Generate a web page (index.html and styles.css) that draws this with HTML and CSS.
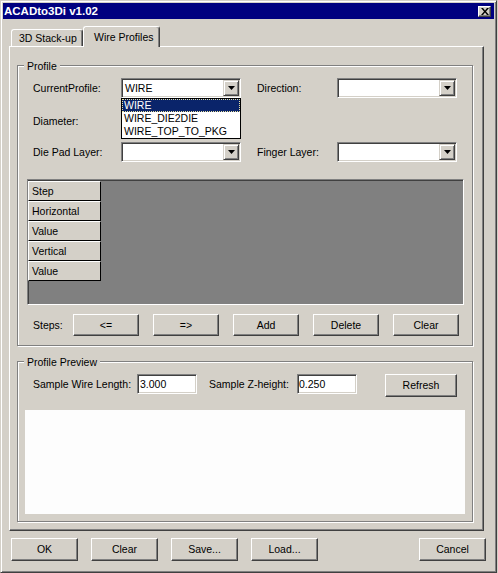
FILE: index.html
```html
<!DOCTYPE html>
<html>
<head>
<meta charset="utf-8">
<title>ACADto3Di v1.02</title>
<link rel="stylesheet" href="styles.css">
</head>
<body>
<div class="window">
  <div class="titlebar">
    <span class="title">ACADto3Di v1.02</span>
    <span class="close-btn"><svg width="8" height="7" viewBox="0 0 8 7"><path d="M0 0h2l2 2.4L6 0h2L5 3.5 8 7H6L4 4.6 2 7H0l3-3.5z" fill="#000"/></svg></span>
  </div>
  <div class="tabs">
    <div class="tab tab-first">3D Stack-up</div>
    <div class="tab tab-active">Wire Profiles</div>
  </div>
  <div class="panel">
    <div class="group group-profile">
      <span class="legend">Profile</span>
      <div class="form-grid">
        <span class="lbl">CurrentProfile:</span>
        <div class="combo-wrap">
          <div class="combo"><span class="combo-text">WIRE</span><span class="combo-btn"><svg width="7" height="4" viewBox="0 0 7 4"><path d="M0 0h7L3.5 4z" fill="#000"/></svg></span></div>
          <div class="droplist">
            <div class="item item-sel">WIRE</div>
            <div class="item">WIRE_DIE2DIE</div>
            <div class="item">WIRE_TOP_TO_PKG</div>
          </div>
        </div>
        <span></span>
        <span class="lbl">Direction:</span>
        <div class="combo"><span class="combo-text"></span><span class="combo-btn"><svg width="7" height="4" viewBox="0 0 7 4"><path d="M0 0h7L3.5 4z" fill="#000"/></svg></span></div>

        <span class="lbl lbl-diam">Diameter:</span>
        <span class="empty-row"></span>

        <span class="lbl">Die Pad Layer:</span>
        <div class="combo"><span class="combo-text"></span><span class="combo-btn"><svg width="7" height="4" viewBox="0 0 7 4"><path d="M0 0h7L3.5 4z" fill="#000"/></svg></span></div>
        <span></span>
        <span class="lbl">Finger Layer:</span>
        <div class="combo"><span class="combo-text"></span><span class="combo-btn"><svg width="7" height="4" viewBox="0 0 7 4"><path d="M0 0h7L3.5 4z" fill="#000"/></svg></span></div>
      </div>

      <div class="data-grid">
        <div class="hcell">Step</div>
        <div class="hcell">Horizontal</div>
        <div class="hcell">Value</div>
        <div class="hcell">Vertical</div>
        <div class="hcell">Value</div>
      </div>

      <div class="steps-row">
        <span class="steps-lbl">Steps:</span>
        <div class="steps-btns">
          <button class="btn btn-step">&lt;=</button>
          <button class="btn btn-step">=&gt;</button>
          <button class="btn btn-step">Add</button>
          <button class="btn btn-step">Delete</button>
          <button class="btn btn-step">Clear</button>
        </div>
      </div>
    </div>

    <div class="group group-preview">
      <span class="legend">Profile Preview</span>
      <div class="preview-row">
        <span class="lbl lbl-len">Sample Wire Length:</span>
        <span class="textbox">3.000</span>
        <span class="lbl lbl-z">Sample Z-height:</span>
        <span class="textbox textbox-z">0.250</span>
        <button class="btn btn-refresh">Refresh</button>
      </div>
      <div class="preview-canvas"></div>
    </div>
  </div>
  <div class="footer">
    <button class="btn btn-foot">OK</button>
    <button class="btn btn-foot">Clear</button>
    <button class="btn btn-foot">Save...</button>
    <button class="btn btn-foot">Load...</button>
    <button class="btn btn-foot btn-cancel">Cancel</button>
  </div>
</div>
</body>
</html>
```

FILE: styles.css
```css
* {
  box-sizing: border-box;
}

body {
  margin: 0;
  background: #d4d0c8;
  font-family: "Liberation Sans", Arial, sans-serif;
  font-size: 10.5px;
  line-height: 13px;
  color: #000;
}

.window {
  width: 497px;
  height: 573px;
  border: 1px solid;
  border-color: #d4d0c8 #404040 #404040 #d4d0c8;
  box-shadow: inset 1px 1px #fff, inset -1px -1px #808080;
  padding: 2px;
  display: flex;
  flex-direction: column;
  background: #d4d0c8;
}

.titlebar {
  height: 16px;
  flex: none;
  background: #000080;
  color: #fff;
  display: flex;
  align-items: center;
  justify-content: space-between;
  padding: 0 3px 0 1px;
}

.title {
  font-weight: bold;
  font-size: 11.5px;
}

.close-btn {
  width: 13px;
  height: 11px;
  background: #d4d0c8;
  border: 1px solid;
  border-color: #fff #404040 #404040 #fff;
  box-shadow: inset -1px -1px #808080;
  display: flex;
  align-items: center;
  justify-content: center;
}

.close-btn svg {
  display: block;
}

/* Tabs */
.tabs {
  flex: none;
  height: 21px;
  margin-top: 7px;
  margin-bottom: -1px;
  padding-left: 8px;
  display: flex;
  align-items: flex-start;
}

.tab {
  border: 1px solid;
  border-bottom: none;
  border-color: #fff #404040 #404040 #fff;
  border-radius: 3px 3px 0 0;
  box-shadow: inset -1px 0 #808080;
  background: #d4d0c8;
  line-height: 16px;
  white-space: nowrap;
}

.tab-first {
  width: 72px;
  height: 17px;
  margin-top: 3px;
  padding-left: 7px;
}

.tab-active {
  width: 77px;
  height: 21px;
  padding-left: 10px;
  padding-top: 2px;
  position: relative;
  z-index: 2;
}

/* Tab panel */
.panel {
  flex: none;
  width: 475px;
  height: 485px;
  margin-left: 6px;
  border: 1px solid;
  border-color: #fff #404040 #404040 #fff;
  box-shadow: inset -1px -1px #808080;
  padding: 18px 0 0 7px;
}

/* Group boxes */
.group {
  position: relative;
  width: 456px;
  border: 1px solid #808080;
  box-shadow: 1px 1px 0 #fff, inset 1px 1px 0 #fff;
}

.legend {
  position: absolute;
  top: -6px;
  left: 6px;
  padding: 0 3px 0 3px;
  background: #d4d0c8;
  line-height: 13px;
}

.group-profile {
  padding: 12px 0 9px 9px;
}

.group-preview {
  margin-top: 15px;
  padding: 12px 0 7px 7px;
}

.form-grid {
  margin-left: 6px;
  display: grid;
  grid-template-columns: 88px 120px 16px 80px 120px;
  grid-auto-rows: 20px;
  row-gap: 12px;
  align-items: center;
}

.lbl {
  white-space: nowrap;
}

.lbl-diam {
  padding-top: 3px;
}

.empty-row {
  grid-column: 2 / 6;
}

.combo-wrap {
  position: relative;
  height: 20px;
}

.combo {
  width: 120px;
  height: 20px;
  background: #fff;
  border: 1px solid;
  border-color: #808080 #fff #fff #808080;
  box-shadow: inset 1px 1px #404040, inset -1px -1px #d4d0c8;
  padding: 1px;
  display: flex;
  align-items: center;
}

.combo-text {
  flex: 1;
  padding-left: 2px;
}

.combo-btn {
  width: 16px;
  height: 16px;
  background: #d4d0c8;
  border: 1px solid;
  border-color: #d4d0c8 #404040 #404040 #d4d0c8;
  box-shadow: inset 1px 1px #fff, inset -1px -1px #808080;
  display: flex;
  align-items: center;
  justify-content: center;
}

.combo-btn svg {
  display: block;
}

.droplist {
  position: absolute;
  top: 20px;
  left: 0;
  width: 120px;
  background: #fff;
  border: 1px solid #000;
  z-index: 5;
}

.item {
  height: 13px;
  line-height: 13px;
  padding-left: 2px;
  white-space: nowrap;
}

.item-sel {
  background: #0a246a;
  color: #fff;
  outline: 1px dotted #e8e0a0;
  outline-offset: -1px;
}

/* Data grid */
.data-grid {
  margin-top: 17px;
  width: 437px;
  height: 126px;
  background: #808080;
  border: 1px solid;
  border-color: #808080 #fff #fff #808080;
  box-shadow: inset 1px 1px #404040;
  padding: 1px 0 0 0;
}

.hcell {
  width: 73px;
  height: 20px;
  background: #d4d0c8;
  border: 1px solid;
  border-color: #fff #000 #000 #fff;
  padding-left: 3px;
  line-height: 18px;
}

/* Steps */
.steps-row {
  margin-top: 9px;
  margin-left: 6px;
  height: 22px;
  display: flex;
  align-items: center;
}

.steps-lbl {
  width: 40px;
}

.steps-btns {
  display: flex;
  gap: 14px;
}

.btn {
  font-family: inherit;
  font-size: inherit;
  color: #000;
  background: #d4d0c8;
  border: 1px solid;
  border-color: #fff #404040 #404040 #fff;
  box-shadow: inset -1px -1px #808080;
  padding: 0;
  margin: 0;
  line-height: 13px;
  text-align: center;
}

.btn-step {
  width: 66px;
  height: 22px;
}

/* Preview */
.preview-row {
  margin-left: 8px;
  height: 23px;
  display: flex;
  align-items: flex-start;
}

.preview-row .lbl {
  line-height: 20px;
}

.lbl-len {
  width: 104px;
}

.lbl-z {
  width: 88px;
  margin-left: 12px;
}

.textbox {
  width: 60px;
  height: 20px;
  background: #fff;
  border: 1px solid;
  border-color: #808080 #fff #fff #808080;
  box-shadow: inset 1px 1px #404040, inset -1px -1px #d4d0c8;
  padding-left: 2px;
  line-height: 18px;
}

.textbox-z {
  padding-left: 1px;
}

.btn-refresh {
  width: 72px;
  height: 23px;
  margin-left: 28px;
}

.preview-canvas {
  margin-top: 13px;
  width: 440px;
  height: 104px;
  background: #fdfdfd;
}

/* Footer */
.footer {
  flex: none;
  margin-top: 7px;
  padding: 0 8px;
  display: flex;
  gap: 13px;
}

.btn-foot {
  width: 67px;
  height: 23px;
}

.btn-cancel {
  margin-left: auto;
}
```
